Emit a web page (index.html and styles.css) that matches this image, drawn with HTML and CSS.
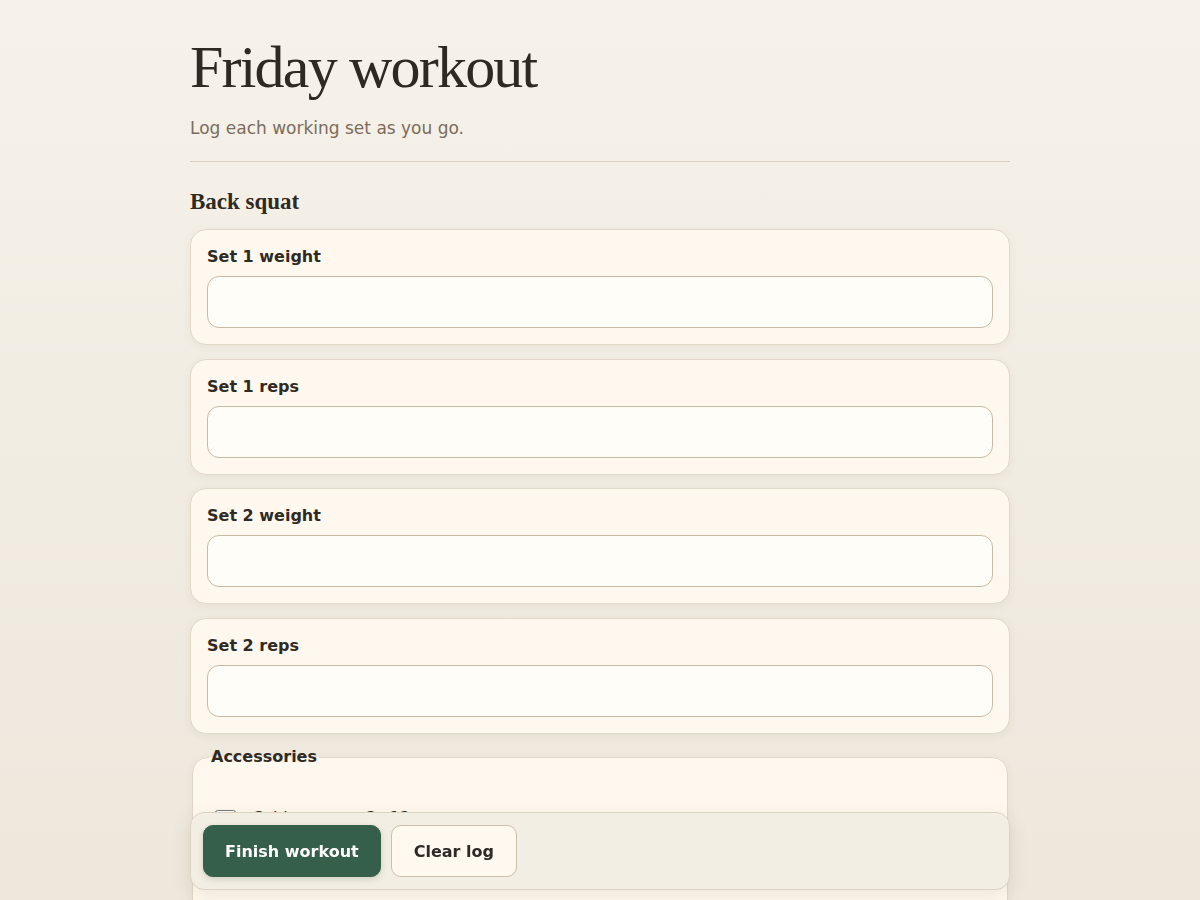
FILE: index.html
```html
<!DOCTYPE html>
<html lang="en">
<head>
<meta charset="utf-8">
<title>Friday workout</title>
<link rel="stylesheet" href="styles.css">
</head>
<body>
<div class="scroller">
<main class="page">
  <header class="page-header">
    <h1 class="title">Friday workout</h1>
    <p class="subtitle">Log each working set as you go.</p>
  </header>

  <form class="log">
    <h2 class="exercise">Back squat</h2>

    <div class="set-card">
      <label class="set-label" for="s1w">Set 1 weight</label>
      <input class="set-input" id="s1w" type="text">
    </div>
    <div class="set-card">
      <label class="set-label" for="s1r">Set 1 reps</label>
      <input class="set-input" id="s1r" type="text">
    </div>
    <div class="set-card">
      <label class="set-label" for="s2w">Set 2 weight</label>
      <input class="set-input" id="s2w" type="text">
    </div>
    <div class="set-card">
      <label class="set-label" for="s2r">Set 2 reps</label>
      <input class="set-input" id="s2r" type="text">
    </div>

    <fieldset class="accessories">
      <legend class="acc-legend">Accessories</legend>
      <ul class="acc-list">
        <li class="acc-item"><label class="acc-label"><input class="acc-check" type="checkbox"><span>Cable rows — 3×12</span></label></li>
        <li class="acc-item"><label class="acc-label"><input class="acc-check" type="checkbox"><span>Walking lunges — 3×10</span></label></li>
      </ul>
    </fieldset>

    <div class="action-bar">
      <button class="btn btn-primary" type="button">Finish workout</button>
      <button class="btn btn-secondary" type="button">Clear log</button>
    </div>
  </form>
</main>
</div>
</body>
</html>
```

FILE: styles.css
```css
html,
body {
  height: 100%;
}

body {
  margin: 0;
  overflow: hidden;
  background: linear-gradient(180deg, #f6f2e9 0%, #ede7dc 100%);
  color: #2e2a23;
  font-family: "DejaVu Sans", sans-serif;
}

.scroller {
  height: 100vh;
  overflow-y: auto;
  scrollbar-width: none;
}

.scroller::-webkit-scrollbar {
  display: none;
}

.page {
  max-width: 820px;
  margin: 0 auto;
  padding: 34px 0 40px;
}

.page-header {
  padding-bottom: 21px;
  border-bottom: 1px solid #d8cfc2;
}

.title {
  margin: 0;
  font-family: "Liberation Serif", "Times New Roman", serif;
  font-weight: 400;
  font-size: 60px;
  line-height: 66px;
  letter-spacing: -0.03em;
  color: #2e2a22;
}

.subtitle {
  margin: 16px 0 0;
  font-size: 17px;
  line-height: 24px;
  color: #7b6c5d;
}

.log {
  display: flex;
  flex-direction: column;
  gap: 13.5px;
  margin-top: 26px;
}

.exercise {
  margin: 0 0 -0.5px;
  font-family: "Liberation Serif", "Times New Roman", serif;
  font-weight: 700;
  font-size: 23px;
  line-height: 28px;
  color: #2e2a22;
}

.set-card {
  display: flex;
  flex-direction: column;
  gap: 9px;
  padding: 17px 16px 16px;
  background: #fff8ee;
  border: 1px solid #e2d8c9;
  border-radius: 16px;
  box-shadow: 0 2px 10px rgba(70, 50, 20, 0.06);
}

.set-label {
  font-weight: 700;
  font-size: 16px;
  line-height: 20px;
  color: #2f2a24;
}

.set-input {
  box-sizing: border-box;
  height: 52px;
  margin: 0;
  padding: 0 14px;
  background: #fffdf8;
  border: 1px solid #c9baa6;
  border-radius: 12px;
  font-family: "DejaVu Sans", sans-serif;
  font-size: 16px;
  color: #2e2a23;
  outline: none;
}

.accessories {
  margin: 0 2px;
  padding: 16px 16px 40px;
  background: #fff8ee;
  border: 1px solid #e0d5c6;
  border-radius: 16px;
  box-shadow: 0 2px 10px rgba(70, 50, 20, 0.05);
}

.acc-legend {
  padding: 0 2px;
  font-weight: 700;
  font-size: 16px;
  line-height: 20px;
  color: #2f2a24;
}

.acc-list {
  list-style: none;
  margin: 0;
  padding: 23.5px 0 0;
  display: flex;
  flex-direction: column;
  gap: 22px;
}

.acc-item {
  padding: 0 6px;
}

.acc-label {
  display: flex;
  align-items: flex-start;
  gap: 16px;
  font-size: 16px;
  line-height: 22px;
  color: #2f2a24;
}

.acc-check {
  width: 21px;
  height: 21px;
  margin: 3px 0 0;
  accent-color: #355f4a;
}

.action-bar {
  position: sticky;
  bottom: 10px;
  display: flex;
  gap: 10px;
  padding: 12px;
  background: #f3eee4;
  border: 1px solid #dcd2c2;
  border-radius: 14px;
  box-shadow: 0 6px 22px rgba(70, 50, 20, 0.09);
}

.btn {
  height: 52px;
  padding: 0 21px;
  border-radius: 10px;
  font-family: "DejaVu Sans", sans-serif;
  font-weight: 700;
  font-size: 16px;
  cursor: pointer;
}

.btn-primary {
  background: #355f4a;
  color: #ffffff;
  border: 1px solid #355f4a;
  box-shadow: 0 2px 6px rgba(30, 60, 40, 0.18);
}

.btn-secondary {
  padding: 0 22px;
  background: #fff9f0;
  color: #2f2a24;
  border: 1px solid #cdbfab;
}
```
